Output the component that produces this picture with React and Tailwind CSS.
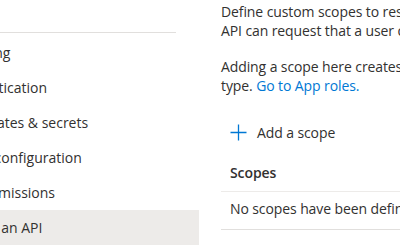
import React from 'react';

const navItems = [
  { label: 'Branding' },
  { label: 'Authentication' },
  { label: 'Certificates & secrets' },
  { label: 'Token configuration' },
  { label: 'API permissions' },
  { label: 'Expose an API', active: true },
];

function PlusIcon() {
  return (
    <svg width="17" height="17" viewBox="0 0 17 17" className="shrink-0">
      <path d="M8.5 0.5v16M0.5 8.5h16" stroke="#0078d4" strokeWidth="1.3" fill="none" />
    </svg>
  );
}

export default function App() {
  return (
    <div
      className="flex w-[400px] h-[250px] overflow-hidden bg-white text-[#323130] text-[14px]"
      style={{ fontFamily: '"Open Sans", "Noto Sans", sans-serif' }}
    >
      {/* left nav, scrolled partly out of view */}
      <nav className="-ml-[100px] w-[299px] shrink-0">
        <div className="mt-[32px] mr-[23px] h-px bg-[#e1dfdd]" />
        <ul className="mt-[2px]">
          {navItems.map((item) => (
            <li
              key={item.label}
              className={`h-[35px] flex items-center pl-[51px] whitespace-nowrap ${
                item.active ? 'bg-[#edebe9]' : ''
              }`}
            >
              {item.label}
            </li>
          ))}
        </ul>
      </nav>

      {/* main content */}
      <main className="ml-[22px] flex-1 min-w-0 pt-[2px] tracking-[-0.1px]">
        <p className="leading-[19px] whitespace-nowrap">
          Define custom scopes to restrict access to data and functionality protected by the
          <br />
          API can request that a user or admin consent to one or more of these.
        </p>
        <p className="mt-[17px] leading-[19px] whitespace-nowrap">
          Adding a scope here creates only delegated permissions. If you are looking to create
          <br />
          type. <span className="text-[#0078d4]">Go to App roles.</span>
        </p>

        <button className="mt-[21px] h-[32px] flex items-center gap-[10px] pl-[9px] pr-2">
          <PlusIcon />
          <span>Add a scope</span>
        </button>

        <div className="mt-[6px]">
          <div className="h-[38px] flex items-center pl-[9px] font-semibold border-b border-[#edebe9]">
            Scopes
          </div>
          <div className="h-[38px] pt-[6px] pl-[9px] border-b border-[#e1dfdd] whitespace-nowrap">
            No scopes have been defined
          </div>
        </div>
      </main>
    </div>
  );
}
